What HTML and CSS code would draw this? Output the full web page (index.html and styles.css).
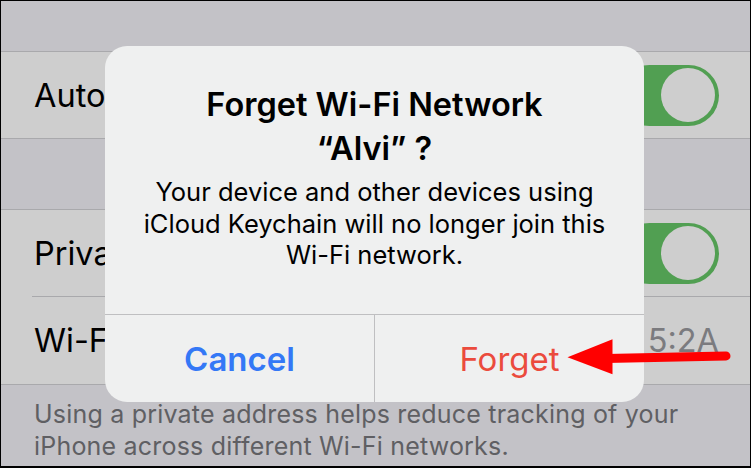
FILE: index.html
```html
<!DOCTYPE html>
<html lang="en">
<head>
<meta charset="utf-8">
<title>Forget Wi-Fi Network</title>
<link rel="stylesheet" href="styles.css">
</head>
<body>
<div class="screen">
  <div class="top-gap"></div>
  <div class="group">
    <div class="row">
      <span class="label">Auto-Join</span>
      <span class="switch"><span class="knob"></span></span>
    </div>
  </div>
  <div class="mid-gap"></div>
  <div class="group">
    <div class="row">
      <span class="label">Private Address</span>
      <span class="switch"><span class="knob"></span></span>
    </div>
    <div class="sep"></div>
    <div class="row row-tall">
      <span class="label">Wi-Fi Address</span>
      <span class="value">5:2A</span>
    </div>
  </div>
  <p class="footer">Using a private address helps reduce tracking of your<br>iPhone across different Wi-Fi networks.</p>

  <div class="dialog">
    <div class="dlg-text">
      <div class="title">Forget Wi-Fi Network<br>“Alvi” ?</div>
      <div class="msg">Your device and other devices using<br>iCloud Keychain will no longer join this<br>Wi-Fi network.</div>
    </div>
    <div class="actions">
      <div class="btn btn-cancel">Cancel</div>
      <div class="btn btn-forget">Forget</div>
    </div>
  </div>

  <svg class="arrow" width="751" height="468" viewBox="0 0 751 468">
    <line x1="606" y1="358.5" x2="726" y2="356" stroke="#ff0000" stroke-width="9" stroke-linecap="round"/>
    <polygon points="567.5,357.3 612.5,339.3 612.5,374.3" fill="#ff0000"/>
  </svg>
</div>
</body>
</html>
```
FILE: styles.css
```css
html, body {
  margin: 0;
  padding: 0;
  background: #ffffff;
}

.screen {
  position: relative;
  width: 751px;
  height: 468px;
  box-sizing: border-box;
  border: 1px solid #000;
  border-bottom-width: 2px;
  background: #c3c2c7;
  overflow: hidden;
  font-family: Inter, "Liberation Sans", sans-serif;
  color: #000;
}

.top-gap {
  height: 50px;
}

.mid-gap {
  height: 70px;
}

.group {
  background: #cecece;
  border-top: 1px solid #a9a9ac;
  border-bottom: 1px solid #a9a9ac;
}

.row {
  height: 86px;
  display: flex;
  align-items: center;
  justify-content: space-between;
  padding: 0 31px 0 33px;
  font-size: 32.5px;
  white-space: nowrap;
}

.row-tall {
  height: 87px;
}

.sep {
  height: 1px;
  margin-left: 31px;
  background: #a9a9ac;
}

.switch {
  width: 100px;
  height: 61px;
  box-sizing: border-box;
  border-radius: 31px;
  background: #519f52;
  display: flex;
  align-items: center;
  justify-content: flex-end;
  padding-right: 4px;
}

.knob {
  width: 54px;
  height: 54px;
  border-radius: 50%;
  background: #cecece;
}

.value {
  color: #7b7b7f;
}

.footer {
  margin: 0;
  padding: 13px 33px 0;
  font-size: 25px;
  letter-spacing: 0.2px;
  line-height: 32px;
  color: #5f5f63;
  white-space: nowrap;
}

.dialog {
  position: absolute;
  left: 104px;
  top: 45px;
  width: 539px;
  height: 356px;
  border-radius: 22px;
  background: #eff0f0;
  display: flex;
  flex-direction: column;
  overflow: hidden;
  text-align: center;
}

.dlg-text {
  flex: 1;
  padding: 37px 10px 0;
}

.title {
  font-size: 32.5px;
  font-weight: 600;
  line-height: 44px;
  white-space: nowrap;
}

.msg {
  margin-top: 5px;
  font-size: 25.5px;
  line-height: 31.5px;
  white-space: nowrap;
}

.actions {
  height: 87px;
  border-top: 1px solid #bfbfc1;
  display: grid;
  grid-template-columns: 270px 1fr;
}

.btn {
  display: flex;
  align-items: center;
  justify-content: center;
  font-size: 33px;
}

.btn-cancel {
  border-right: 1px solid #bfbfc1;
  color: #3478f6;
  font-weight: 600;
}

.btn-forget {
  color: #eb4b3d;
  font-weight: 400;
}

.arrow {
  position: absolute;
  left: -1px;
  top: -1px;
}
```
